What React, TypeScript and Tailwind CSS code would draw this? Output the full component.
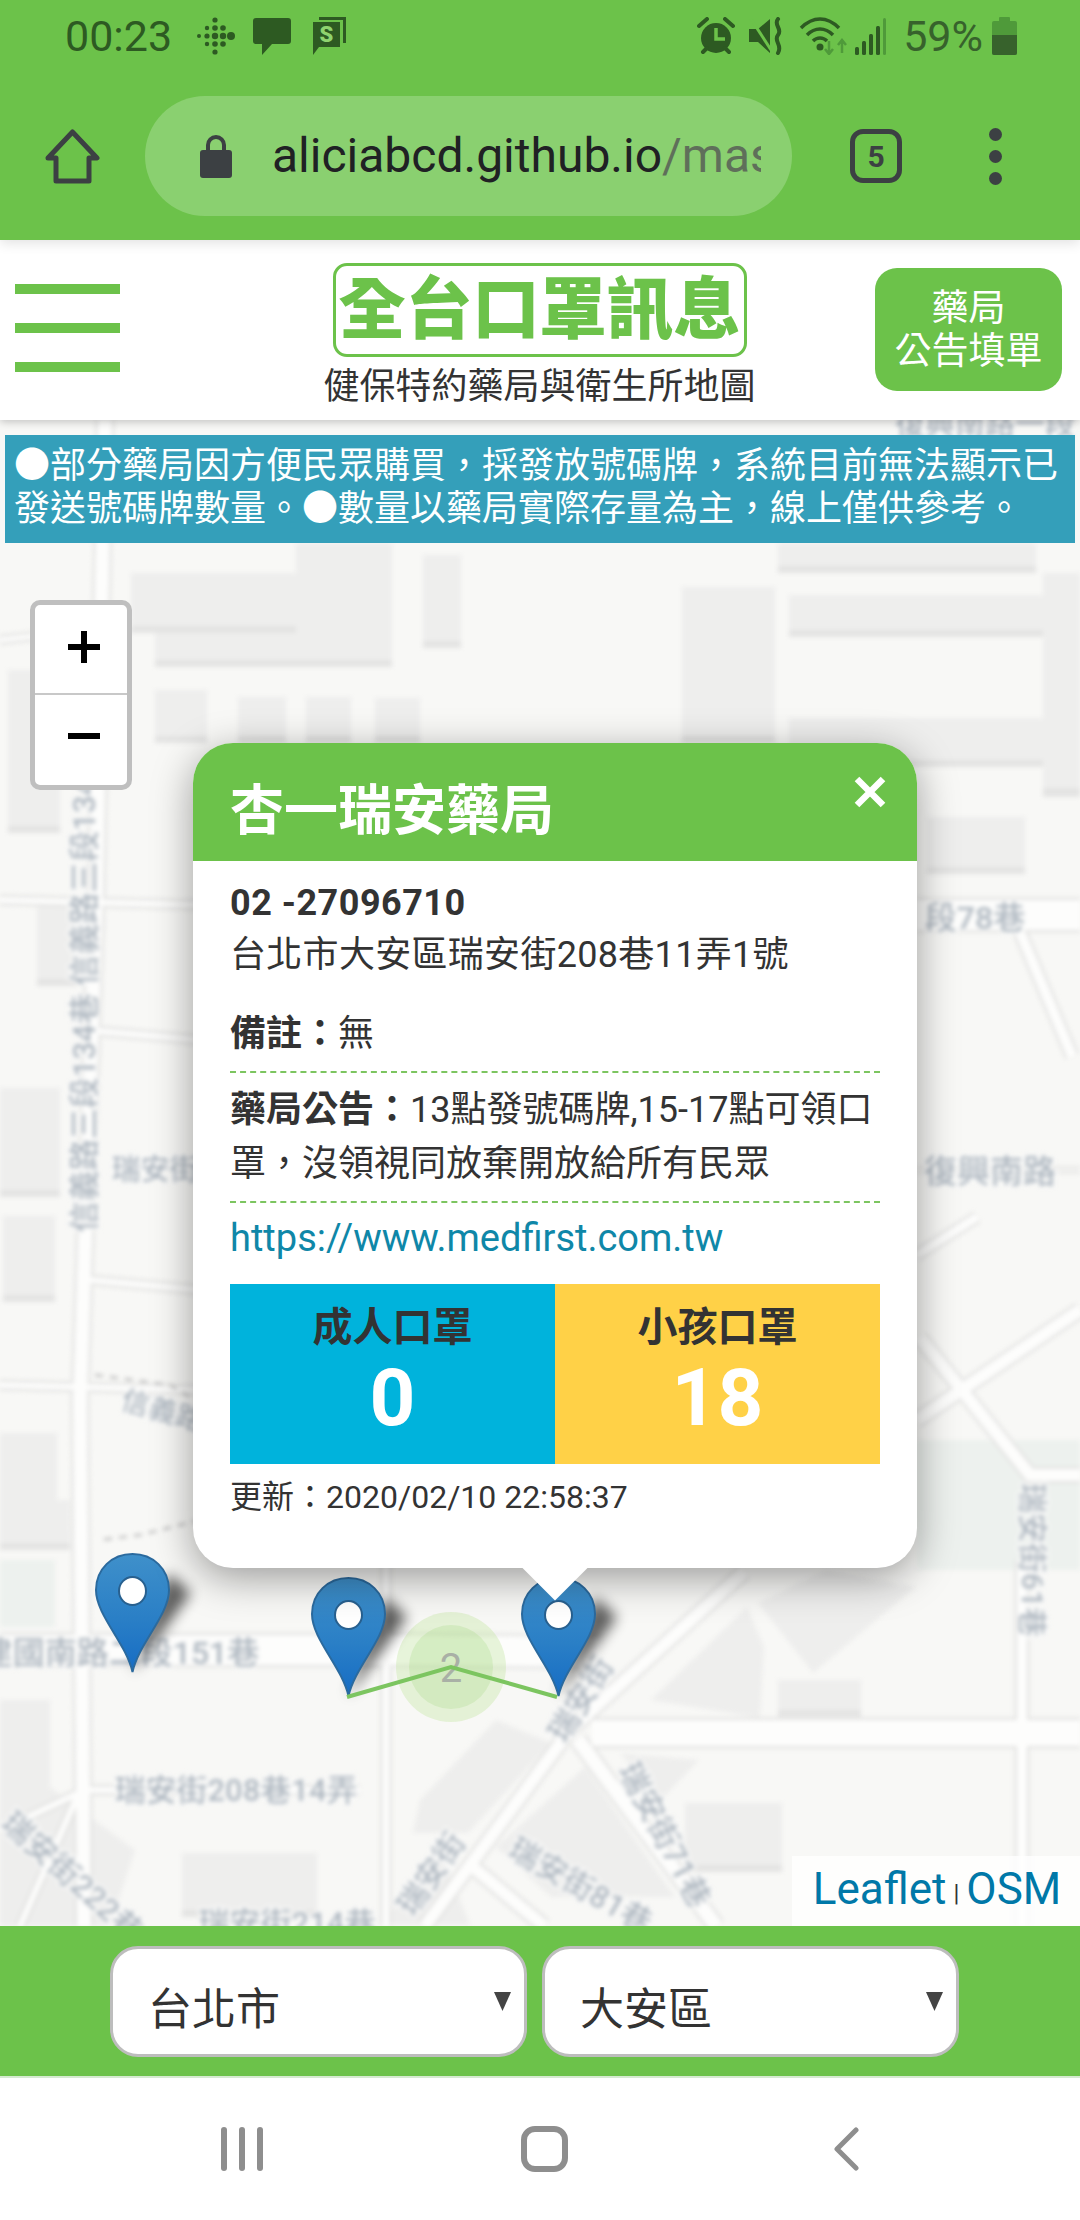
const FONT_STACK = "font-['Roboto','Noto_Sans_CJK_TC',sans-serif]";

const COMMA = "\uFF0C";
const COLON = "\uFF1A";

type MapLabelProps = {
    x: number;
    y: number;
    text: string;
    size?: number;
    rotate?: number;
};

function MapLabel({ x, y, text, size = 27, rotate = 0 }: MapLabelProps) {
    return (
        <text
            x={x}
            y={y}
            fontSize={size}
            fontWeight={500}
            fill="#aeb7c0"
            stroke="#fbfbfa"
            strokeWidth={4}
            paintOrder="stroke"
            textAnchor="middle"
            fontFamily="Roboto, 'Noto Sans CJK TC', sans-serif"
            transform={rotate ? `rotate(${rotate} ${x} ${y})` : undefined}
        >
            {text}
        </text>
    );
}

const BUILDINGS: [number, number, number, number][] = [
    [131, 573, 165, 60],
    [296, 543, 96, 124],
    [155, 633, 237, 34],
    [423, 555, 38, 93],
    [682, 587, 93, 156],
    [778, 543, 258, 30],
    [789, 595, 254, 42],
    [789, 718, 254, 49],
    [1043, 573, 37, 224],
    [155, 690, 52, 53],
    [238, 697, 48, 46],
    [306, 697, 45, 46],
    [375, 698, 45, 45],
    [8, 670, 52, 163],
    [37, 903, 40, 83],
    [0, 1088, 60, 109],
    [3, 1216, 52, 86],
    [0, 1433, 57, 102],
    [927, 817, 98, 57],
    [1043, 740, 37, 55],
    [0, 1500, 70, 50],
    [0, 1700, 50, 100],
    [182, 1853, 135, 64],
    [778, 1680, 83, 37],
    [685, 1803, 97, 69],
];

const POLYGONS = [
    "496,1720 420,1800 413,1833 468,1833 551,1743",
    "585,1767 496,1847 551,1897 675,1897",
    "747,1607 651,1700 760,1718 764,1647",
    "758,1603 813,1673 916,1587 826,1570",
    "620,1753 699,1760 661,1800",
    "0,1750 135,1850 110,1926 0,1926",
    "380,1925 440,1850 470,1925",
];

const ROADS: { d: string; w: number }[] = [
    { d: "M105 420 L96 900 L80 1400 L84 1926", w: 14 },
    { d: "M0 1650 L400 1650 L600 1652", w: 30 },
    { d: "M0 900 L200 905", w: 6 },
    { d: "M85 1030 L200 1040", w: 6 },
    { d: "M90 1280 L200 1290", w: 6 },
    { d: "M0 1385 L200 1390", w: 6 },
    { d: "M386 1560 L386 1926", w: 7 },
    { d: "M592 1733 L1080 1733", w: 26 },
    { d: "M425 1926 L570 1730 L744 1572", w: 12 },
    { d: "M578 1740 L716 1926", w: 14 },
    { d: "M468 1863 L544 1926", w: 12 },
    { d: "M1022 1560 L1022 1926", w: 10 },
    { d: "M0 1830 L85 1790 L360 1790", w: 6 },
    { d: "M20 1926 L80 1790", w: 6 },
    { d: "M85 1720 L85 1790", w: 5 },
    { d: "M917 915 L1080 915", w: 30 },
    { d: "M1020 932 L1072 1056", w: 10 },
    { d: "M917 1170 L1080 1170", w: 2 },
    { d: "M917 1255 L977 1217", w: 8 },
    { d: "M917 1420 L1080 1310", w: 12 },
    { d: "M920 1338 L1030 1475 L1080 1475", w: 12 },
    { d: "M0 640 L130 625", w: 5 },
];

function MapPin({ x, y }: { x: number; y: number }) {
    return (
        <g transform={`translate(${x} ${y})`}>
            <path
                d="M37 120 L96 40 L74 20 L52 76Z"
                fill="#000"
                opacity={0.62}
                className="blur-[7px]"
            />
            <path
                d="M37.5 119 C31 90 1 62 1 37 C1 16 17 1 37.5 1 C58 1 74 16 74 37 C74 62 44 90 37.5 119Z"
                fill="url(#pinFill)"
                stroke="#2b6a9e"
                strokeWidth={2}
            />
            <ellipse cx={37.5} cy={38} rx={13.5} ry={14} fill="#fff" stroke="#28608f" strokeWidth={2} />
        </g>
    );
}

function MapTiles() {
    return (
        <svg
            viewBox="0 420 1080 1506"
            className="absolute inset-0 h-full w-full"
            aria-hidden="true"
        >
            <defs>
                <linearGradient id="pinFill" x1="0" y1="0" x2="0" y2="1">
                    <stop offset="0" stopColor="#3f90ca" />
                    <stop offset="0.55" stopColor="#2a7fc6" />
                    <stop offset="1" stopColor="#166cc4" />
                </linearGradient>
            </defs>
            <rect x={0} y={420} width={1080} height={1506} fill="#f8f8f6" />
            <g className="blur-[2px]">
                <rect x={917} y={1440} width={163} height={130} fill="#edf1ee" />
                <rect x={0} y={1560} width={55} height={67} fill="#edf1ee" />
                {BUILDINGS.map(([x, y, w, h]) => (
                    <g key={`${x}-${y}`}>
                        <rect x={x} y={y} width={w} height={h} fill="#eeeeed" />
                        <rect x={x} y={y + h - 7} width={w} height={7} fill="#e4e4e3" />
                    </g>
                ))}
                {POLYGONS.map((points) => (
                    <polygon key={points} points={points} fill="#eeeeed" />
                ))}
                {ROADS.map((road) => (
                    <path
                        key={road.d}
                        d={road.d}
                        fill="none"
                        stroke="#e3e3e2"
                        strokeWidth={road.w + 5}
                    />
                ))}
                {ROADS.map((road) => (
                    <path
                        key={`${road.d}-fill`}
                        d={road.d}
                        fill="none"
                        stroke="#fdfdfc"
                        strokeWidth={road.w}
                    />
                ))}
                <path
                    d="M95 1375 L170 1385 L195 1400 M200 1520 L140 1535 L100 1540"
                    fill="none"
                    stroke="#c8c8c8"
                    strokeWidth={3}
                    strokeDasharray="8 7"
                />
                <MapLabel x={985} y={434} text="復興南路一段" size={30} />
                <MapLabel x={95} y={1005} text="信義路三段134巷 信義路三段134" size={31} rotate={-90} />
                <MapLabel x={155} y={1180} text="瑞安街" size={29} />
                <MapLabel x={160} y={1420} text="信義路" size={28} rotate={16} />
                <MapLabel x={975} y={929} text="段78巷" size={32} />
                <MapLabel x={990} y={1183} text="復興南路" size={33} />
                <MapLabel x={1022} y={1560} text="瑞安街61巷" size={30} rotate={90} />
                <MapLabel x={120} y={1664} text="建國南路二段151巷" size={32} />
                <MapLabel x={236} y={1801} text="瑞安街208巷14弄" size={31} />
                <MapLabel x={65} y={1885} text="瑞安街222巷" size={31} rotate={42} />
                <MapLabel x={287} y={1934} text="瑞安街214巷" size={31} />
                <MapLabel x={440} y={1880} text="瑞安街" size={31} rotate={-55} />
                <MapLabel x={575} y={1895} text="瑞安街81巷" size={31} rotate={30} />
                <MapLabel x={655} y={1840} text="瑞安街71巷" size={31} rotate={62} />
                <MapLabel x={590} y={1705} text="瑞安街" size={31} rotate={-58} />
            </g>
            <circle cx={451} cy={1667} r={55} fill="#b5e28c" opacity={0.3} />
            <circle cx={451} cy={1667} r={42} fill="#8fd36a" opacity={0.2} />
            <text
                x={451}
                y={1682}
                fontSize={40}
                fill="#a9b0a6"
                textAnchor="middle"
                fontFamily="Roboto, sans-serif"
            >
                2
            </text>
            <MapPin x={95} y={1553} />
            <MapPin x={311} y={1577} />
            <MapPin x={521} y={1577} />
            <polyline
                points="347,1697 451,1667 557,1697"
                fill="none"
                stroke="#7cc560"
                strokeWidth={4}
            />
        </svg>
    );
}

function StatusLeftIcons() {
    const dots: [number, number, number][] = [
        [20, 4, 2.6],
        [20, 12, 2.8],
        [20, 20, 3.2],
        [20, 28, 2.8],
        [20, 36, 2.6],
        [12, 12, 2.2],
        [12, 20, 2.6],
        [12, 28, 2.2],
        [28, 12, 2.8],
        [28, 20, 3.2],
        [28, 28, 2.8],
        [4, 20, 2],
        [36, 20, 4],
    ];

    return (
        <div className="ml-[23px] flex items-center">
            <svg width="40" height="40" viewBox="0 0 40 40" fill="#2d5a22">
                {dots.map(([cx, cy, r]) => (
                    <circle key={`${cx}-${cy}`} cx={cx} cy={cy} r={r} />
                ))}
            </svg>
            <svg width="38" height="38" viewBox="0 0 38 38" fill="#2d5a22" className="ml-[18px]">
                <path d="M3 1 H35 a3 3 0 0 1 3 3 V24 a3 3 0 0 1 -3 3 H19 L9 38 V27 H3 a3 3 0 0 1 -3 -3 V4 a3 3 0 0 1 3 -3Z" />
            </svg>
            <svg width="33" height="38" viewBox="0 0 33 38" fill="#2d5a22" className="ml-[22px]">
                <path d="M6 0 H33 V26 H30 V3 H6Z" />
                <path d="M0 5 H27 V30 H6 L0 38Z" />
                <text
                    x={13.5}
                    y={25}
                    fontSize={22}
                    fontWeight={900}
                    fill="#8fd36f"
                    textAnchor="middle"
                    fontFamily="Roboto, sans-serif"
                >
                    S
                </text>
            </svg>
        </div>
    );
}

function StatusRightIcons() {
    return (
        <div className="ml-auto flex items-center">
            <svg width="38" height="38" viewBox="0 0 38 38" className="text-[#2d5a22]">
                <circle cx="19" cy="21" r="15" fill="currentColor" />
                <path d="M19 11 V22 H28" fill="none" stroke="#6cc24a" strokeWidth="3.5" />
                <path
                    d="M2 9 L10 2 M36 9 L28 2 M6 35 L10 31 M32 35 L28 31"
                    stroke="currentColor"
                    strokeWidth="4"
                    strokeLinecap="round"
                />
            </svg>
            <svg width="36" height="38" viewBox="0 0 36 38" className="ml-[14px] text-[#2d5a22]">
                <path d="M0 12 H9 L21 2 V36 L9 25 H0Z" fill="currentColor" />
                <path d="M2 2 L24 36" stroke="#6cc24a" strokeWidth="3" />
                <path
                    d="M29 2 C24 8 34 12 29 18 C24 24 34 28 29 36"
                    fill="none"
                    stroke="currentColor"
                    strokeWidth="4"
                    strokeLinecap="round"
                />
            </svg>
            <svg width="48" height="38" viewBox="0 0 48 38" className="ml-[14px] text-[#2d5a22]">
                <path
                    d="M2 11 C14 -1 28 -1 40 11 M8 18 C16 10 26 10 34 18 M14 24 C18 20 24 20 28 24"
                    fill="none"
                    stroke="currentColor"
                    strokeWidth="3.5"
                />
                <circle cx="21" cy="30" r="3.5" fill="currentColor" />
                <path
                    d="M30 24 V36 M26 32 L30 37 L34 32 M43 36 V24 M39 28 L43 23 L47 28"
                    fill="none"
                    stroke="#4f9a3a"
                    strokeWidth="2.5"
                />
            </svg>
            <svg width="32" height="38" viewBox="0 0 32 38" className="ml-[8px]" fill="#2d5a22">
                <rect x="0" y="30" width="4" height="8" rx="1.5" />
                <rect x="7" y="24" width="4" height="14" rx="1.5" />
                <rect x="14" y="17" width="4" height="21" rx="1.5" />
                <rect x="21" y="9" width="4" height="29" rx="1.5" />
                <rect x="28" y="1" width="3" height="37" rx="1.5" fill="#4f9a3a" />
            </svg>
            <span className="ml-[16px] text-[43px] leading-none text-[#37622c]">59%</span>
            <svg width="25" height="38" viewBox="0 0 25 38" className="ml-[9px]">
                <rect x="7" y="0" width="11" height="6" rx="1" fill="#4f9a3a" />
                <rect x="0" y="4" width="25" height="34" rx="2" fill="#4f9a3a" />
                <path d="M0 18 H25 V36 a2 2 0 0 1 -2 2 H2 a2 2 0 0 1 -2 -2Z" fill="#37622c" />
            </svg>
        </div>
    );
}

function BrowserChrome() {
    return (
        <div className="relative z-10 h-[240px] bg-[#6cc24a] shadow-[0_3px_12px_rgba(0,0,0,0.12)]">
            <div className="flex h-[72px] items-center pl-[65px] pr-[63px]">
                <span className="text-[43px] leading-none text-[#2d5a22]">00:23</span>
                <StatusLeftIcons />
                <StatusRightIcons />
            </div>
            <div className="flex h-[168px] items-center">
                <svg width="55" height="55" viewBox="0 0 55 55" className="ml-[45px]">
                    <path
                        d="M27.5 3 L52 29 H44 V52 H11 V29 H3Z"
                        fill="none"
                        stroke="#3c4043"
                        strokeWidth="5"
                        strokeLinejoin="round"
                    />
                </svg>
                <div className="ml-[45px] flex h-[120px] w-[647px] items-center rounded-full bg-[#8ad070] pl-[55px] pr-[30px]">
                    <svg width="32" height="44" viewBox="0 0 32 44" fill="#3c4043">
                        <path
                            d="M8 18 V11 a8 8 0 0 1 16 0 V18"
                            fill="none"
                            stroke="#3c4043"
                            strokeWidth="4"
                        />
                        <rect x="0" y="16" width="32" height="28" rx="3" />
                    </svg>
                    <span className="ml-[40px] block w-[489px] overflow-hidden whitespace-nowrap text-[48px] leading-[60px] text-[#202124]">
                        aliciabcd.github.io<span className="text-[#5f6f5a]">/mask</span>
                    </span>
                </div>
                <div className="ml-[58px] flex h-[54px] w-[52px] items-center justify-center rounded-[13px] border-[5px] border-[#3c4043] text-[30px] font-bold text-[#3c4043]">
                    5
                </div>
                <div className="ml-[87px] flex flex-col gap-[9px]">
                    <div className="h-[13px] w-[13px] rounded-full bg-[#3c4043]" />
                    <div className="h-[13px] w-[13px] rounded-full bg-[#3c4043]" />
                    <div className="h-[13px] w-[13px] rounded-full bg-[#3c4043]" />
                </div>
            </div>
        </div>
    );
}

function SiteHeader() {
    return (
        <header className="relative z-[5] flex h-[180px] items-start bg-white shadow-[0_2px_8px_rgba(0,0,0,0.22)]">
            <div className="ml-[15px] mt-[44px] flex w-[105px] flex-col gap-[29px]">
                <div className="h-[10px] bg-[#6cc24a]" />
                <div className="h-[10px] bg-[#6cc24a]" />
                <div className="h-[10px] bg-[#6cc24a]" />
            </div>
            <div className="ml-[205px] flex w-[429px] flex-col items-center pt-[23px]">
                <div className="flex h-[94px] w-[414px] items-center justify-center whitespace-nowrap rounded-[14px] border-[3px] border-[#6cc24a] text-[67px] font-black leading-none text-[#6cc24a]">
                    全台口罩訊息
                </div>
                <div className="mt-[8px] whitespace-nowrap text-[36px] leading-[44px] text-[#333]">
                    健保特約藥局與衛生所地圖
                </div>
            </div>
            <div className="ml-[121px] mt-[28px] flex h-[123px] w-[187px] flex-col items-center justify-center rounded-[22px] bg-[#6cc24a] text-[37px] leading-[43px] text-white">
                <span>藥局</span>
                <span>公告填單</span>
            </div>
        </header>
    );
}

function PharmacyPopup() {
    return (
        <div className="absolute left-[193px] top-[323px] w-[724px] rounded-[40px] bg-white text-[36px] text-[#333] shadow-[0_10px_40px_rgba(0,0,0,0.38)]">
            <div className="relative flex h-[118px] items-center rounded-t-[40px] bg-[#6cc24a] pl-[37px] pt-[20px] text-[54px] font-bold leading-none text-white">
                杏一瑞安藥局
                <svg width="32" height="32" viewBox="0 0 32 32" className="absolute right-[31px] top-[33px]">
                    <path d="M3 3 L29 29 M29 3 L3 29" stroke="#fff" strokeWidth="6.5" />
                </svg>
            </div>
            <div className="px-[37px] pb-[49px] pt-[20px]">
                <div className="text-[36px] font-bold leading-[44px] tracking-[0.5px]">02 -27096710</div>
                <div className="mt-[8px] leading-[44px] tracking-[0.3px]">台北市大安區瑞安街208巷11弄1號</div>
                <div className="mt-[30px] leading-[54px]">
                    <b>備註{COLON}</b>無
                </div>
                <div className="mt-[10px] border-t-2 border-dashed border-[#7cc560]" />
                <div className="mt-[10px] leading-[54px]">
                    <b>藥局公告{COLON}</b>13點發號碼牌,15-17點可領口罩{COMMA}沒領視同放棄開放給所有民眾
                </div>
                <div className="mt-[10px] border-t-2 border-dashed border-[#7cc560]" />
                <a className="mt-[13px] block text-[38px] leading-[44px] text-[#0f87a8]">
                    https://www.medfirst.com.tw
                </a>
                <div className="mt-[24px] grid h-[180px] grid-cols-2 text-center">
                    <div className="bg-[#00b3dc] pt-[22px]">
                        <div className="text-[40px] font-bold leading-[44px] text-[#333]">成人口罩</div>
                        <div className="mt-[3px] text-[80px] font-bold leading-[90px] text-white">0</div>
                    </div>
                    <div className="bg-[#ffd147] pt-[22px]">
                        <div className="text-[40px] font-bold leading-[44px] text-[#333]">小孩口罩</div>
                        <div className="mt-[3px] text-[80px] font-bold leading-[90px] text-white">18</div>
                    </div>
                </div>
                <div className="mt-[11px] text-[32px] leading-[44px]">更新{COLON}2020/02/10 22:58:37</div>
            </div>
            <div className="absolute left-[329px] top-full h-[33px] w-[66px] overflow-hidden">
                <div className="mx-auto -mt-[23px] h-[46px] w-[46px] rotate-45 bg-white" />
            </div>
        </div>
    );
}

function MapArea() {
    return (
        <main className="relative h-[1506px] overflow-hidden">
            <MapTiles />
            <div className="absolute left-[5px] top-[15px] h-[108px] w-[1070px] bg-[#349fba] px-[9px] pt-[10px] text-[36px] leading-[43px] text-white">
                ●部分藥局因方便民眾購買{COMMA}採發放號碼牌{COMMA}系統目前無法顯示已發送號碼牌數量。●數量以藥局實際存量為主{COMMA}線上僅供參考。
            </div>
            <div className="absolute left-[30px] top-[180px] w-[102px] rounded-[10px] border-[5px] border-[#bfbfbf] bg-white text-[#000]">
                <div className="flex h-[90px] items-center justify-center border-b-2 border-[#c8c8c8] pb-[4px] pl-[6px]">
                    <svg width="34" height="34" viewBox="0 0 34 34">
                        <path d="M17 1 V33 M1 17 H33" stroke="#000" strokeWidth="6" />
                    </svg>
                </div>
                <div className="flex h-[90px] items-center justify-center pb-[8px] pl-[6px]">
                    <svg width="34" height="34" viewBox="0 0 34 34">
                        <path d="M1 17 H33" stroke="#000" strokeWidth="6" />
                    </svg>
                </div>
            </div>
            <PharmacyPopup />
            <div className="absolute bottom-0 right-0 flex h-[70px] w-[288px] items-start justify-center bg-white/80 pl-[2px] pt-[8px] text-[44px] leading-[50px] text-[#0078a8]">
                Leaflet<span className="mx-[7px] text-[24px] leading-[58px] text-[#333]">|</span>OSM
            </div>
        </main>
    );
}

function AreaSelect({ label }: { label: string }) {
    return (
        <div className="relative h-[111px] w-[417px]">
            <select className="h-full w-full appearance-none rounded-[28px] border-[3px] border-[#bdbdbd] bg-white pl-[35px] pt-[16px] text-[44px] text-[#333] outline-none">
                <option>{label}</option>
            </select>
            <svg width="17" height="19" viewBox="0 0 17 19" className="absolute right-[16px] top-[46px]">
                <path d="M0 0 H17 L8.5 19Z" fill="#444" />
            </svg>
        </div>
    );
}

function BottomBar() {
    return (
        <div className="flex h-[152px] gap-[15px] border-b-2 border-[#d5ead0] bg-[#6cc24a] pl-[110px] pt-[20px]">
            <AreaSelect label="台北市" />
            <AreaSelect label="大安區" />
        </div>
    );
}

function NavBar() {
    return (
        <nav className="flex h-[142px] items-center bg-white pl-[221px]">
            <div className="flex h-[44px] w-[42px] justify-between">
                <div className="w-[6px] rounded-full bg-[#8e8e8e]" />
                <div className="w-[6px] rounded-full bg-[#8e8e8e]" />
                <div className="w-[6px] rounded-full bg-[#8e8e8e]" />
            </div>
            <div className="ml-[258px] h-[46px] w-[47px] rounded-[14px] border-[6px] border-[#8e8e8e]" />
            <svg width="26" height="44" viewBox="0 0 26 44" className="ml-[265px]">
                <path
                    d="M23 3 L4 22 L23 41"
                    fill="none"
                    stroke="#8e8e8e"
                    strokeWidth="5"
                    strokeLinecap="round"
                    strokeLinejoin="round"
                />
            </svg>
        </nav>
    );
}

export default function App() {
    return (
        <div className={`h-[2220px] w-[1080px] overflow-hidden bg-white ${FONT_STACK}`}>
            <BrowserChrome />
            <SiteHeader />
            <MapArea />
            <BottomBar />
            <NavBar />
        </div>
    );
}
